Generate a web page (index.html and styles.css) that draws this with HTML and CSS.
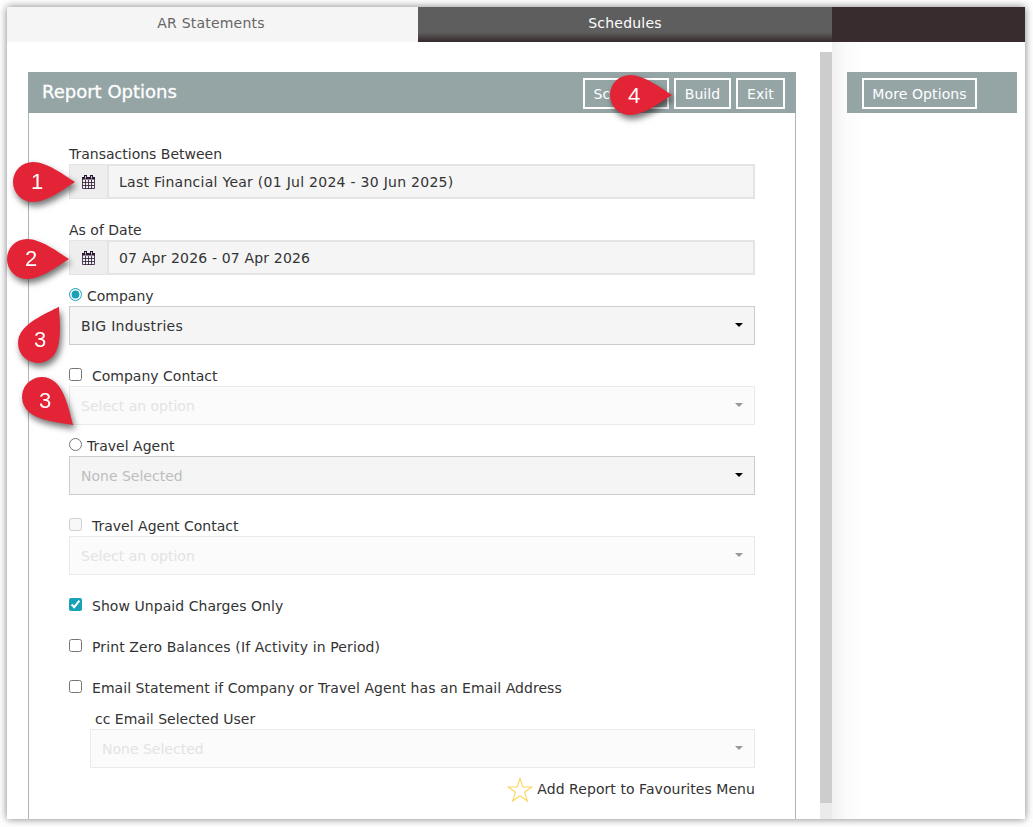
FILE: index.html
```html
<!DOCTYPE html>
<html lang="en">
<head>
<meta charset="UTF-8" />
<meta name="viewport" content="width=device-width, initial-scale=1" />
<title>AR Statements</title>
<link rel="stylesheet" href="styles.css">
</head>
<body>

<svg class="defs" width="0" height="0">
  <symbol id="calendar" viewBox="0 0 14 14">
    <path fill="none" stroke="#2b1733" stroke-width=".8" d="M.5 2.5h12v11H.5zM.5 7.5h12M.5 10.5h12M3.5 5v9M6.5 5v9M9.5 5v9" />
    <path fill="#2b1733" d="M0 2h13v2.6H0zM2 0h3v3H2zM8 0h3v3H8z" />
    <path stroke="#fff" stroke-width=".8" d="M3.5 1v2.5M9.5 1v2.5" />
  </symbol>
  <symbol id="pin" viewBox="-21 -21 64 42">
    <path fill="#e32436" d="M42 0C31-7 14-20 0-20A20 20 0 0 0 0 20C14 20 31 7 42 0z" />
  </symbol>
</svg>

<div class="window">
  <header class="tabs">
    <a class="tab active">AR Statements</a>
    <a class="tab">Schedules</a>
  </header>

  <div class="content">
    <main>
      <section class="panel">
        <div class="panel-header">
          <h1>Report Options</h1>
          <button class="btn btn-schedule">Schedule</button>
          <button class="btn btn-build">Build</button>
          <button class="btn btn-exit">Exit</button>
        </div>

        <form class="options">
          <label class="field-label">Transactions Between</label>
          <div class="date-input first-date">
            <span class="date-icon"><svg><use href="#calendar" /></svg></span>
            <span class="date-value">Last Financial Year (01 Jul 2024 - 30 Jun 2025)</span>
          </div>

          <label class="field-label">As of Date</label>
          <div class="date-input">
            <span class="date-icon"><svg><use href="#calendar" /></svg></span>
            <span class="date-value as-of">07 Apr 2026 - 07 Apr 2026</span>
          </div>

          <label class="check radio company"><input type="radio" name="type" checked /><span>Company</span></label>
          <div class="select filled"><span>BIG Industries</span></div>

          <label class="check contact"><input type="checkbox" /><span>Company Contact</span></label>
          <div class="select disabled"><span>Select an option</span></div>

          <label class="check radio agent"><input type="radio" name="type" /><span>Travel Agent</span></label>
          <div class="select empty"><span>None Selected</span></div>

          <label class="check contact"><input type="checkbox" disabled /><span>Travel Agent Contact</span></label>
          <div class="select disabled"><span>Select an option</span></div>

          <label class="check line unpaid"><input type="checkbox" checked /><span>Show Unpaid Charges Only</span></label>
          <label class="check line zero"><input type="checkbox" /><span>Print Zero Balances (If Activity in Period)</span></label>
          <label class="check line"><input type="checkbox" /><span>Email Statement if Company or Travel Agent has an Email Address</span></label>

          <div class="cc">
            <label class="cc-label">cc Email Selected User</label>
            <div class="select disabled"><span>None Selected</span></div>
          </div>

          <div class="favourite">
            <svg width="26" height="26" viewBox="0 0 26 26"><path fill="none" stroke="#fcd560" stroke-width="1.1" d="M13 1.5L15.8 10H24.7L17.6 15.2L20.3 24L13 18.7L5.7 24L8.4 15.2L1.3 10H10.2z" /></svg>
            <span>Add Report to Favourites Menu</span>
          </div>
        </form>
      </section>
      <div class="scrollbar"><div class="thumb"></div></div>
    </main>

    <aside>
      <div class="side-header">
        <button class="btn btn-more">More Options</button>
      </div>
    </aside>
  </div>
</div>

<!-- numbered steps -->
<div class="pin pin-1"><svg><use href="#pin" /></svg><span>1</span></div>
<div class="pin pin-2"><svg><use href="#pin" /></svg><span>2</span></div>
<div class="pin pin-3a"><svg><use href="#pin" /></svg><span>3</span></div>
<div class="pin pin-3b"><svg><use href="#pin" /></svg><span>3</span></div>
<div class="pin pin-4"><svg><use href="#pin" /></svg><span>4</span></div>

</body>
</html>
```
FILE: styles.css
```css
* {
  box-sizing: border-box;
}
body {
  margin: 0;
  padding: 7px 8px 8px 7px;
  height: 827px;
  overflow: hidden;
  background: #fff;
  color: #333;
  font-family: Verdana, 'DejaVu Sans', sans-serif;
  font-size: 14px;
}
.defs {
  position: absolute;
}
.window {
  width: 1018px;
  height: 812px;
  background: #fff;
  box-shadow: 0 0 8px rgba(0,0,0,0.5);
}
.tabs {
  display: flex;
  height: 35px;
  background: #382c2e;
}
.tab {
  width: 414px;
  padding-bottom: 3px;
  line-height: 32px;
  text-align: center;
  letter-spacing: 0.2px;
  color: #fff;
  background: linear-gradient(#5e5e5e 72%, #382c2e 98%);
}
.tab.active {
  width: 411px;
  padding-right: 3px;
  background: #f5f5f5;
  color: #666;
}
.content {
  display: flex;
  height: 777px;
}
main {
  display: flex;
  justify-content: space-between;
  width: 825px;
  padding-left: 21px;
}
.panel {
  width: 768px;
  margin-top: 30px;
  border: 1px solid #a9b7b7;
  border-width: 0 1px;
}
.panel-header {
  display: flex;
  align-items: center;
  gap: 5px;
  height: 41px;
  margin: 0 -1px;
  padding: 2px 11px 0 14px;
  background: #95a5a6;
}
h1 {
  margin: 0 auto 4px 0;
  color: #fff;
  font-size: 18px;
  font-weight: normal;
  -webkit-text-stroke: 0.3px #fff;
}
.btn {
  height: 31px;
  padding: 0;
  border: 2px solid #fff;
  background: transparent;
  color: #fff;
  font: inherit;
  letter-spacing: 0.1px;
}
.btn-schedule { width: 86px; }
.btn-build { width: 57px; }
.btn-exit { width: 49px; }
.btn-more { width: 115px; }
.scrollbar {
  width: 12px;
  margin-top: 10px;
  background: #ebebeb;
}
.thumb {
  height: 751px;
  background: #cdcdcd;
}
aside {
  width: 193px;
  padding: 30px 8px 0 15px;
  background: linear-gradient(to right, #f1f1f1, #fbfbfb 14px, #fff 35px);
}
.side-header {
  height: 41px;
  padding: 6px 15px;
  background: #95a5a6;
}

/* form */
.options {
  padding: 32px 40px 0;
}
.field-label {
  display: block;
  height: 19px;
  line-height: 18px;
}
.date-input {
  display: flex;
  height: 35px;
  border: 2px solid #e4e4e4;
  background: #f5f5f5;
}
.first-date {
  margin-bottom: 22px;
}
.date-icon {
  width: 39px;
  margin: -1px 0 -1px -1px;
  padding: 10px 0 0 12px;
  border-right: 2px solid #e4e4e4;
  background: #eee;
}
.date-icon svg {
  display: block;
  width: 14px;
  height: 14px;
}
.date-value {
  padding-left: 10px;
  line-height: 32px;
  letter-spacing: 0.27px;
}
.as-of {
  letter-spacing: 0.16px;
}
.check {
  display: flex;
  align-items: center;
  gap: 10px;
  height: 20px;
}
.check input {
  width: 13px;
  height: 13px;
  margin: 0 0 3px;
  accent-color: #17a2b8;
}
.radio {
  gap: 5px;
}
.company { margin-top: 11px; }
.agent { margin-top: 11px; }
.contact { margin-top: 21px; }
.unpaid { margin-top: 21px; }
.line {
  margin-bottom: 21px;
  letter-spacing: 0.05px;
}
.zero {
  letter-spacing: 0.12px;
}
.select {
  display: flex;
  align-items: center;
  justify-content: space-between;
  height: 39px;
  padding: 0 11px;
  border: 1px solid #ccc;
  background: #f5f5f5;
}
.select::after {
  content: '';
  margin-bottom: 2px;
  border: 4px solid transparent;
  border-top: 4px solid #000;
  border-bottom: 0;
}
.filled span {
  letter-spacing: 0.28px;
}
.empty span {
  color: #bdbdbd;
}
.disabled {
  border-color: #ebebeb;
  background: #fbfbfb;
  color: #e3e3e3;
}
.disabled::after {
  border-top-color: #999;
}
.cc {
  margin: -9px 0 0 21px;
}
.cc-label {
  display: block;
  height: 19px;
  padding-left: 5px;
  line-height: 19px;
}
.favourite {
  display: flex;
  justify-content: flex-end;
  gap: 4px;
  margin-top: 9px;
  line-height: 24px;
  letter-spacing: 0.06px;
}

/* step pins, each svg is placed around the centre of its circle */
.pin {
  position: absolute;
  width: 0;
  height: 0;
  filter: drop-shadow(2px 4px 3px rgba(0,0,0,0.55));
}
.pin svg {
  position: absolute;
  left: -21px;
  top: -21px;
  width: 64px;
  height: 42px;
  transform-origin: 21px 21px;
}
.pin span {
  position: absolute;
  left: -6px;
  top: -12px;
  width: 20px;
  text-align: center;
  color: #fff;
  font: 22px/24px 'Liberation Sans', Arial, sans-serif;
}
.pin-1 { left: 33px; top: 182px; }
.pin-2 { left: 27px; top: 259px; }
.pin-3a { left: 38px; top: 343px; }
.pin-3b { left: 42px; top: 397px; }
.pin-4 { left: 630px; top: 95px; }
.pin-3a svg { transform: rotate(-60deg); }
.pin-3b svg { transform: rotate(42deg); }
.pin-3a span { left: -8px; top: -15px; }
.pin-3b span { left: -7px; top: -8px; }
.pin-4 span { top: -11px; }
```
